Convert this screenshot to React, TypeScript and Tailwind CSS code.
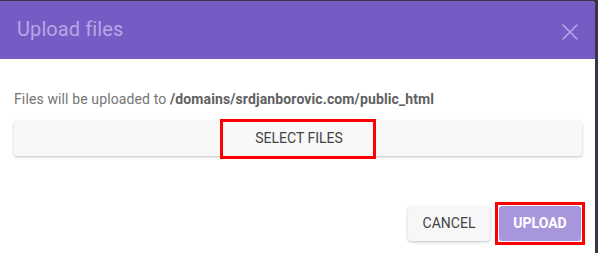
import { X } from "lucide-react";

export default function App() {
    return (
        <div className="w-[598px] h-[253px] bg-[#3b3646] pt-px overflow-hidden font-['Roboto',sans-serif]">
            <div className="w-[595px] h-[252px] bg-white rounded-tr-[4px] flex flex-col">
                {/* Header */}
                <div className="h-[58px] bg-[#775bc5] rounded-tr-[4px] flex items-center justify-between pl-[17px] pr-[11px]">
                    <h2 className="text-[20px] leading-none text-[#b6a6e5] pb-[2px] tracking-[0.1px]">Upload files</h2>
                    <X className="w-[28px] h-[28px] text-[#b6a6e5] mt-[4px]" strokeWidth={1.3} />
                </div>

                {/* Body */}
                <div className="px-[14px] pt-[31px]">
                    <p className="text-[14px] leading-[18px] text-[#757575] tracking-[0.12px]">
                        Files will be uploaded to{" "}
                        <span className="font-bold text-[#616161]">/domains/srdjanborovic.com/public_html</span>
                    </p>
                    <div className="mt-[13px] h-[35px] w-[568px] bg-[#f8f8f8] rounded-[3px] shadow-[0_1px_3px_rgba(0,0,0,0.25)] flex items-center justify-center">
                        <span className="w-[156px] h-[40px] border-[3px] border-[#f00] flex items-center justify-center text-[14px] text-[#444] pl-[2px]">
                            SELECT FILES
                        </span>
                    </div>
                </div>

                {/* Footer */}
                <div className="flex justify-end items-center gap-[5px] pr-[10px] mt-[46px]">
                    <button className="w-[82px] h-[35px] bg-[#f7f7f7] rounded-[4px] shadow-[0_1px_3px_rgba(0,0,0,0.25)] text-[14px] text-[#444]">
                        CANCEL
                    </button>
                    <div className="border-[3px] border-[#f00] p-px">
                        <button className="w-[82px] h-[35px] bg-[#a796db] rounded-[3px] text-[14px] font-bold text-white block">
                            UPLOAD
                        </button>
                    </div>
                </div>
            </div>
        </div>
    );
}
